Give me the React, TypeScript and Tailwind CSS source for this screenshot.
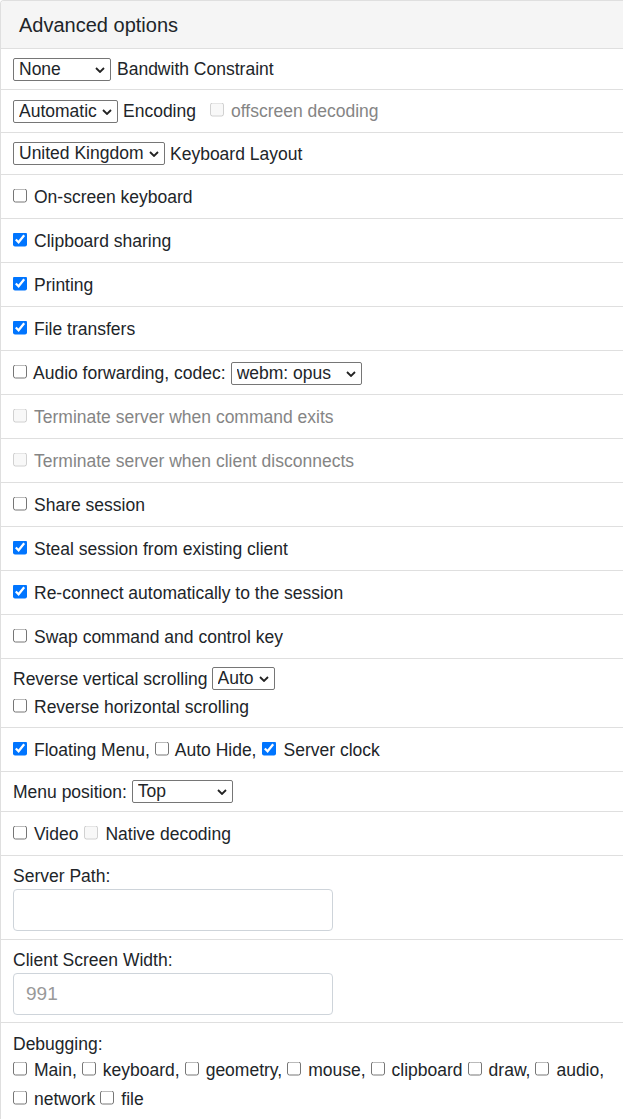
import React from "react";

function Check({ checked, disabled }: { checked?: boolean; disabled?: boolean }) {
  return (
    <input
      type="checkbox"
      defaultChecked={checked}
      disabled={disabled}
      className="m-0 h-[14px] w-[14px] shrink-0 -translate-y-[1.5px]"
    />
  );
}

function Select({ value, options, width }: { value: string; options: string[]; width: string }) {
  return (
    <span className={`relative inline-flex shrink-0 ${width}`}>
      <select
        defaultValue={value}
        className="h-[23px] w-full appearance-none rounded-[2px] border border-[#767676] bg-white py-0 pl-[5px] pr-[18px] text-[17.5px] leading-[21px] text-[#212529]"
      >
        {options.map((o) => (
          <option key={o}>{o}</option>
        ))}
      </select>
      <svg
        className="pointer-events-none absolute right-[6px] top-[9px]"
        width="10"
        height="6"
        viewBox="0 0 10 6"
      >
        <path d="M1 1l4 4 4-4" stroke="#222" strokeWidth="1.8" fill="none" />
      </svg>
    </span>
  );
}

function Row({ h, children }: { h: string; children: React.ReactNode }) {
  return (
    <div className={`flex items-center border-b border-[#dfdfdf] px-3 ${h}`}>{children}</div>
  );
}

function CheckRow({ label, checked, disabled }: { label: string; checked?: boolean; disabled?: boolean }) {
  return (
    <Row h="h-[44px]">
      <label className={`flex items-center gap-[7px] ${disabled ? "text-[#858585]" : ""}`}>
        <Check checked={checked} disabled={disabled} />
        {label}
      </label>
    </Row>
  );
}

function Field({ label, placeholder, h }: { label: string; placeholder?: string; h: string }) {
  return (
    <div className={`flex flex-col border-b border-[#dfdfdf] px-3 pt-[7px] ${h}`}>
      <div className="leading-[26px]">{label}</div>
      <input
        type="text"
        placeholder={placeholder}
        className="h-[42px] w-[320px] rounded-[4px] border border-[#ced4da] bg-white px-[12px] text-[19px] placeholder:text-[#999]"
      />
    </div>
  );
}

const debugItems = [
  "Main,",
  "keyboard,",
  "geometry,",
  "mouse,",
  "clipboard",
  "draw,",
  "audio,",
  "network",
  "file",
];

export default function App() {
  return (
    <div className="min-h-screen bg-white font-['Liberation_Sans',Arial,sans-serif] text-[17.5px] leading-[26px] text-[#212529]">
      <div className="overflow-hidden rounded-tl-[4px] border-l border-t border-[#dfdfdf]">
        <div className="flex h-[48px] items-center border-b border-[#dfdfdf] bg-[#f5f5f5] px-[18px] text-[20px]">
          Advanced options
        </div>

        <Row h="h-[41px]">
          <div className="flex items-center gap-[6px]">
            <Select value="None" options={["None", "1 Mbps", "2 Mbps", "5 Mbps"]} width="w-[98px]" />
            <span>Bandwith Constraint</span>
          </div>
        </Row>
        <Row h="h-[43px]">
          <div className="flex items-center gap-[5px]">
            <Select value="Automatic" options={["Automatic", "JPEG", "PNG", "WebP"]} width="w-[105px]" />
            <span>Encoding</span>
          </div>
          <label className="ml-[14px] flex items-center gap-[7px] text-[#858585]">
            <Check disabled />
            offscreen decoding
          </label>
        </Row>
        <Row h="h-[42px]">
          <div className="flex items-center gap-[5px]">
            <Select value="United Kingdom" options={["United Kingdom", "United States", "Germany", "France"]} width="w-[152px]" />
            <span>Keyboard Layout</span>
          </div>
        </Row>

        <CheckRow label="On-screen keyboard" />
        <CheckRow label="Clipboard sharing" checked />
        <CheckRow label="Printing" checked />
        <CheckRow label="File transfers" checked />
        <Row h="h-[44px]">
          <label className="flex items-center gap-[6px]">
            <Check />
            Audio forwarding, codec:
          </label>
          <span className="ml-[5px]">
            <Select value="webm: opus" options={["webm: opus", "ogg: opus", "mp3", "wav"]} width="w-[131px]" />
          </span>
        </Row>
        <CheckRow label="Terminate server when command exits" disabled />
        <CheckRow label="Terminate server when client disconnects" disabled />
        <CheckRow label="Share session" />
        <CheckRow label="Steal session from existing client" checked />
        <CheckRow label="Re-connect automatically to the session" checked />
        <CheckRow label="Swap command and control key" />

        <div className="flex h-[69px] flex-col justify-center border-b border-[#dfdfdf] px-3 pb-[1px]">
          <div className="flex h-[28px] items-center gap-[4px]">
            <span>Reverse vertical scrolling</span>
            <Select value="Auto" options={["Auto", "Yes", "No"]} width="w-[63px]" />
          </div>
          <label className="flex h-[28px] items-center gap-[7px]">
            <Check />
            Reverse horizontal scrolling
          </label>
        </div>

        <Row h="h-[44px]">
          <label className="flex items-center gap-[7px]">
            <Check checked />
            Floating Menu,
          </label>
          <label className="ml-[5px] flex items-center gap-[6px]">
            <Check />
            Auto Hide,
          </label>
          <label className="ml-[6px] flex items-center gap-[7px]">
            <Check checked />
            Server clock
          </label>
        </Row>

        <Row h="h-[40px]">
          <div className="flex items-center gap-[5px]">
            <span>Menu position:</span>
            <Select value="Top" options={["Top", "Bottom", "Left", "Right"]} width="w-[101px]" />
          </div>
        </Row>

        <Row h="h-[44px]">
          <label className="flex items-center gap-[7px]">
            <Check />
            Video
          </label>
          <label className="ml-[6px] flex items-center gap-[7px]">
            <Check disabled />
            Native decoding
          </label>
        </Row>

        <Field label="Server Path:" h="h-[84px]" />
        <Field label="Client Screen Width:" placeholder="991" h="h-[83px]" />

        <div className="flex flex-col px-3 pb-[12px] pt-[8px]">
          <div className="leading-[26px]">Debugging:</div>
          <div className="flex flex-wrap gap-x-[5px] gap-y-[3px]">
            {debugItems.map((d) => (
              <label key={d} className="flex h-[26px] items-center gap-[7px]">
                <Check />
                {d}
              </label>
            ))}
          </div>
        </div>
      </div>
    </div>
  );
}
